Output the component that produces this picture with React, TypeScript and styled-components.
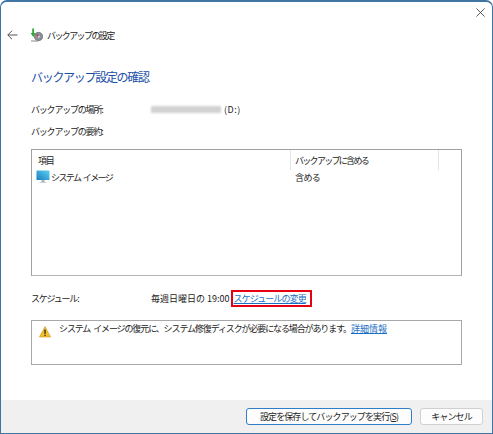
import styled, { createGlobalStyle } from "styled-components";

const GlobalStyle = createGlobalStyle`
    html, body {
        margin: 0;
        padding: 0;
        background: #ffffff;
    }
    body {
        font-family: "Noto Sans CJK JP", "Noto Sans", sans-serif;
        font-size: 9px;
        color: #222222;
    }
`

export default function App() {
    return (
        <>
            <GlobalStyle />
            <Window>
                <CloseRow>
                    <CloseIcon viewBox="0 0 10 10">
                        <path d="M0.5 0.5L9.5 9.5M9.5 0.5L0.5 9.5" stroke="#333" strokeWidth="0.9" fill="none" />
                    </CloseIcon>
                </CloseRow>
                <NavBar>
                    <BackIcon viewBox="0 0 11 10">
                        <path d="M0.8 5H10.5M5 0.8L0.8 5L5 9.2" stroke="#555" strokeWidth="1" fill="none" />
                    </BackIcon>
                    <BackupIcon viewBox="0 0 13 14">
                        <circle cx="8.5" cy="8.5" r="4.2" fill="#8b8f98" stroke="#555a64" strokeWidth="0.6" />
                        <circle cx="8.5" cy="8.5" r="1.2" fill="#e6e8ee" />
                        <path d="M6.5 5.5L9 7.5L7.5 9.5Z" fill="#b5423f" />
                        <path d="M1 12.5H8V13.6H1Z" fill="#8a8a80" />
                        <path d="M2.2 0.5H4V5H5.6L3.2 9L0.6 5H2.2Z" fill="#2fa83a" />
                    </BackupIcon>
                    <NavTitle>バックアップの設定</NavTitle>
                </NavBar>
                <Content>
                    <Heading>バックアップ設定の確認</Heading>
                    <InfoRow>
                        <Label>バックアップの場所:</Label>
                        <Value>
                            <Blurred />
                            <DriveText>(D:)</DriveText>
                        </Value>
                    </InfoRow>
                    <SummaryLabel>バックアップの要約:</SummaryLabel>
                    <SummaryBox>
                        <HeaderRow>
                            <HeaderCell>項目</HeaderCell>
                            <HeaderCell $divided>バックアップに含める</HeaderCell>
                            <HeaderFiller />
                        </HeaderRow>
                        <ItemRow>
                            <ItemName>
                                <MonitorIcon viewBox="0 0 14 14">
                                    <defs>
                                        <linearGradient id="screen" x1="0" y1="1" x2="1" y2="0">
                                            <stop offset="0" stopColor="#1a7fc4" />
                                            <stop offset="1" stopColor="#5fd0ee" />
                                        </linearGradient>
                                    </defs>
                                    <rect x="0.5" y="0.5" width="13" height="9.5" rx="0.6" fill="url(#screen)" />
                                    <rect x="5.5" y="10" width="3" height="2" fill="#aab2ba" />
                                    <rect x="3.5" y="12" width="7" height="1" fill="#c8ced4" />
                                </MonitorIcon>
                                システム イメージ
                            </ItemName>
                            <ItemValue>含める</ItemValue>
                        </ItemRow>
                    </SummaryBox>
                    <ScheduleRow>
                        <Label>スケジュール:</Label>
                        <Value>
                            毎週日曜日の 19:00
                            <ScheduleHighlight>
                                <Link href="#">スケジュールの変更</Link>
                            </ScheduleHighlight>
                        </Value>
                    </ScheduleRow>
                    <NoticeBox>
                        <WarningIcon viewBox="0 0 12 12">
                            <path d="M6 0.6L11.6 11H0.4Z" fill="#f5c02a" stroke="#b98a10" strokeWidth="0.5" />
                            <rect x="5.4" y="3.6" width="1.3" height="4.2" fill="#222" />
                            <rect x="5.4" y="8.6" width="1.3" height="1.3" fill="#222" />
                        </WarningIcon>
                        <NoticeText>
                            システム イメージの復元に、システム修復ディスクが必要になる場合があります。<Link href="#" $wide>詳細情報</Link>
                        </NoticeText>
                    </NoticeBox>
                </Content>
                <Footer>
                    <Button $primary>設定を保存してバックアップを実行(<u>S</u>)</Button>
                    <Button>キャンセル</Button>
                </Footer>
            </Window>
        </>
    )
}

const Window = styled.div`
    width: 493px;
    height: 434px;
    box-sizing: border-box;
    display: flex;
    flex-direction: column;
    background: #ffffff;
    border: 1px solid #3f74a3;
    border-top-width: 2px;
    border-radius: 7px 7px 0 0;
    overflow: hidden;
`

const CloseRow = styled.div`
    height: 20px;
    display: flex;
    justify-content: flex-end;
    align-items: center;
    padding: 0 7px 0 0;
`

const CloseIcon = styled.svg`
    width: 9px;
    height: 9px;
`

const NavBar = styled.div`
    height: 26px;
    display: flex;
    align-items: center;
    padding-left: 6px;
`

const BackIcon = styled.svg`
    width: 11px;
    height: 10px;
    margin-right: 12px;
`

const BackupIcon = styled.svg`
    width: 13px;
    height: 14px;
    margin-right: 4px;
`

const NavTitle = styled.span`
    font-size: 9px;
    letter-spacing: -1.6px;
    color: #222222;
`

const Content = styled.div`
    flex: 1;
    padding: 0 30px;
    display: flex;
    flex-direction: column;
`

const Heading = styled.h1`
    margin: 20px 0 0;
    height: 18px;
    line-height: 18px;
    font-size: 12px;
    font-weight: 400;
    letter-spacing: -1.3px;
    color: #1a4fa8;
`

const InfoRow = styled.div`
    display: grid;
    grid-template-columns: 120px 1fr;
    align-items: center;
    height: 14px;
    margin-top: 16px;
`

const Label = styled.span`
    font-size: 9px;
    letter-spacing: -1.2px;
    color: #222222;
`

const Value = styled.span`
    display: flex;
    align-items: center;
    font-size: 9px;
    letter-spacing: 0;
    color: #222222;
`

const Blurred = styled.span`
    width: 70px;
    height: 7px;
    background: #d2d2d2;
    filter: blur(1.2px);
`

const DriveText = styled.span`
    margin-left: 3px;
    letter-spacing: 0.5px;
`

const SummaryLabel = styled(Label)`
    display: block;
    height: 14px;
    line-height: 14px;
    margin-top: 9px;
`

const SummaryBox = styled.div`
    height: 127px;
    box-sizing: border-box;
    margin-top: 10px;
    border: 1px solid #a0a0a0;
    border-bottom-color: #b4b4b4;
    flex-shrink: 0;
`

const HeaderRow = styled.div`
    display: grid;
    grid-template-columns: 258px 149px 1fr;
    height: 20px;
`

const HeaderCell = styled.div<{ $divided?: boolean }>`
    display: flex;
    align-items: center;
    padding-left: ${props => props.$divided ? "4px" : "6px"};
    font-size: 9px;
    letter-spacing: ${props => props.$divided ? "-1.7px" : "-1.2px"};
    color: #222222;
    border-left: ${props => props.$divided ? "1px solid #e5e5e5" : "none"};
    border-right: ${props => props.$divided ? "1px solid #e5e5e5" : "none"};
`

const HeaderFiller = styled.div``

const ItemRow = styled.div`
    display: grid;
    grid-template-columns: 258px 1fr;
    height: 14px;
    align-items: center;
`

const ItemName = styled.div`
    display: flex;
    align-items: center;
    padding-left: 4px;
    font-size: 9px;
    letter-spacing: -1.6px;
    word-spacing: 2px;
    white-space: pre;
    color: #222222;
`

const MonitorIcon = styled.svg`
    width: 14px;
    height: 14px;
    margin-right: 1px;
`

const ItemValue = styled.div`
    padding-left: 5px;
    font-size: 9px;
    letter-spacing: -0.6px;
    color: #222222;
`

const ScheduleRow = styled(InfoRow)`
    margin-top: 14px;
    height: 17px;
`

const ScheduleHighlight = styled.span`
    display: inline-flex;
    align-items: center;
    box-sizing: border-box;
    width: 81px;
    height: 17px;
    margin-left: 1px;
    padding-left: 1px;
    border: 2px solid #e60012;
`

const Link = styled.a<{ $wide?: boolean }>`
    font-size: 9px;
    letter-spacing: ${props => props.$wide ? "0" : "-0.9px"};
    color: #1a6fc4;
    text-decoration: underline;
`

const NoticeBox = styled.div`
    height: 45px;
    box-sizing: border-box;
    margin-top: 13px;
    border: 1px solid #a8a8a8;
    display: flex;
    align-items: flex-start;
    padding: 1px 0 0 7px;
    flex-shrink: 0;
`

const WarningIcon = styled.svg`
    width: 12px;
    height: 12px;
    margin: 4px 8px 0 0;
    flex-shrink: 0;
`

const NoticeText = styled.span`
    font-size: 9px;
    letter-spacing: -1.12px;
    word-spacing: 2px;
    color: #222222;
    white-space: nowrap;
`

const Footer = styled.div`
    height: 33px;
    flex-shrink: 0;
    box-sizing: border-box;
    background: #f0f0f0;
    display: flex;
    justify-content: flex-end;
    align-items: center;
    gap: 8px;
    padding-right: 9px;
`

const Button = styled.button<{ $primary?: boolean }>`
    width: ${props => props.$primary ? "166px" : "63px"};
    height: 17px;
    padding: 0;
    font-family: inherit;
    font-size: 9px;
    letter-spacing: -0.9px;
    line-height: 1;
    color: #222222;
    background: #fdfdfd;
    border: 1px solid ${props => props.$primary ? "#2f7fc8" : "#d0d0d0"};
    border-radius: 3px;
`
